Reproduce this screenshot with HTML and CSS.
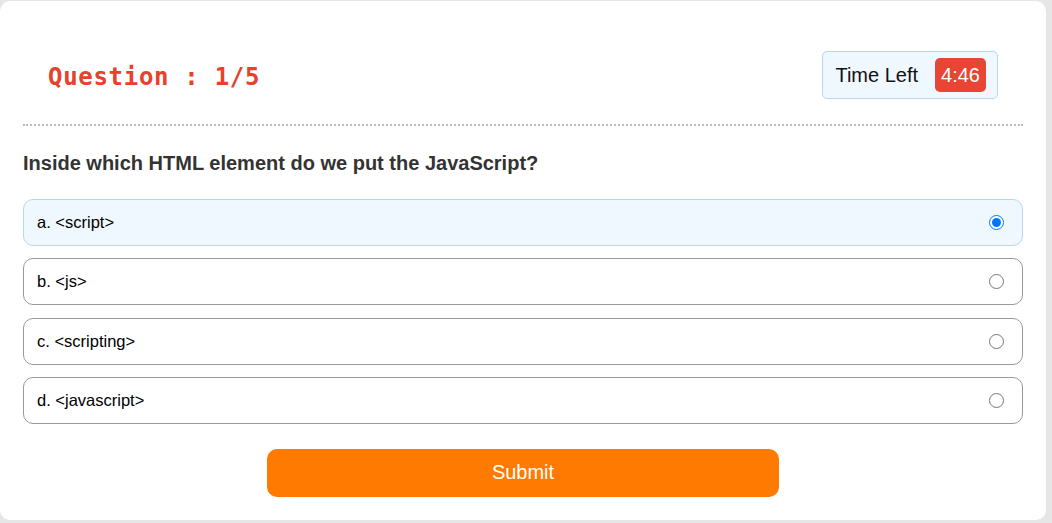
FILE: index.html
```html
<!DOCTYPE html>
<html lang="en">
<head>
<meta charset="utf-8">
<title>Quiz</title>
<link rel="stylesheet" href="styles.css">
</head>
<body>
<div class="card">
  <div class="header">
    <div class="title">Question : 1/5</div>
    <div class="timer"><span class="timer-label">Time Left</span><span class="timer-badge">4:46</span></div>
  </div>
  <div class="question">Inside which HTML element do we put the JavaScript?</div>
  <ul class="options">
    <li class="option selected"><span class="option-text">a. &lt;script&gt;</span><input type="radio" name="q" checked></li>
    <li class="option"><span class="option-text">b. &lt;js&gt;</span><input type="radio" name="q"></li>
    <li class="option"><span class="option-text">c. &lt;scripting&gt;</span><input type="radio" name="q"></li>
    <li class="option"><span class="option-text">d. &lt;javascript&gt;</span><input type="radio" name="q"></li>
  </ul>
  <div class="actions"><button class="submit">Submit</button></div>
</div>
</body>
</html>
```
FILE: styles.css
```css
html, body {
  margin: 0;
  padding: 0;
}
body {
  background: #e6e6e6;
  font-family: "Liberation Sans", Arial, sans-serif;
  padding-top: 1px;
  height: 523px;
  box-sizing: border-box;
  overflow: hidden;
}
.card {
  width: 1046px;
  height: 519px;
  box-sizing: border-box;
  background: #fff;
  border-radius: 10px;
  padding: 0 23px;
}
.header {
  display: flex;
  justify-content: space-between;
  align-items: center;
  padding: 50px 25px 25px 25px;
  border-bottom: 2px dotted #bbbbbb;
}
.title {
  font-family: "DejaVu Sans Mono", "Liberation Mono", monospace;
  font-weight: bold;
  font-size: 24px;
  color: #e8412b;
  letter-spacing: 0.7px;
  padding-top: 3px;
}
.timer {
  display: flex;
  align-items: center;
  gap: 17px;
  background: #f0f8ff;
  border: 1px solid #b8d6ef;
  border-radius: 5px;
  padding: 6px 11px 6px 12px;
}
.timer-label {
  font-size: 20px;
  color: #111;
}
.timer-badge {
  background: #e84535;
  color: #fff;
  font-size: 20px;
  line-height: 24px;
  padding: 5px 6px;
  border-radius: 5px;
}
.question {
  margin-top: 25px;
  font-size: 20px;
  font-weight: bold;
  color: #333;
  line-height: 24px;
}
.options {
  list-style: none;
  margin: 24px 0 0 0;
  padding: 0;
  display: flex;
  flex-direction: column;
  gap: 12.33px;
}
.option {
  display: flex;
  align-items: center;
  justify-content: space-between;
  height: 47px;
  box-sizing: border-box;
  border: 1px solid #999;
  border-radius: 10px;
  padding: 0 13px;
  font-size: 16.5px;
  color: #000;
}
.option.selected {
  background: #f0f8ff;
  border-color: #b8d6ef;
}
.option input {
  margin: 0 5px 0 0;
  width: 15px;
  height: 15px;
  accent-color: #0075ff;
}
.actions {
  display: flex;
  justify-content: center;
  margin-top: 25px;
}
.submit {
  width: 512px;
  height: 48px;
  border: none;
  border-radius: 10px;
  background: #ff7a00;
  color: #fff;
  font-family: "Liberation Sans", Arial, sans-serif;
  font-size: 20px;
  cursor: pointer;
}
```
